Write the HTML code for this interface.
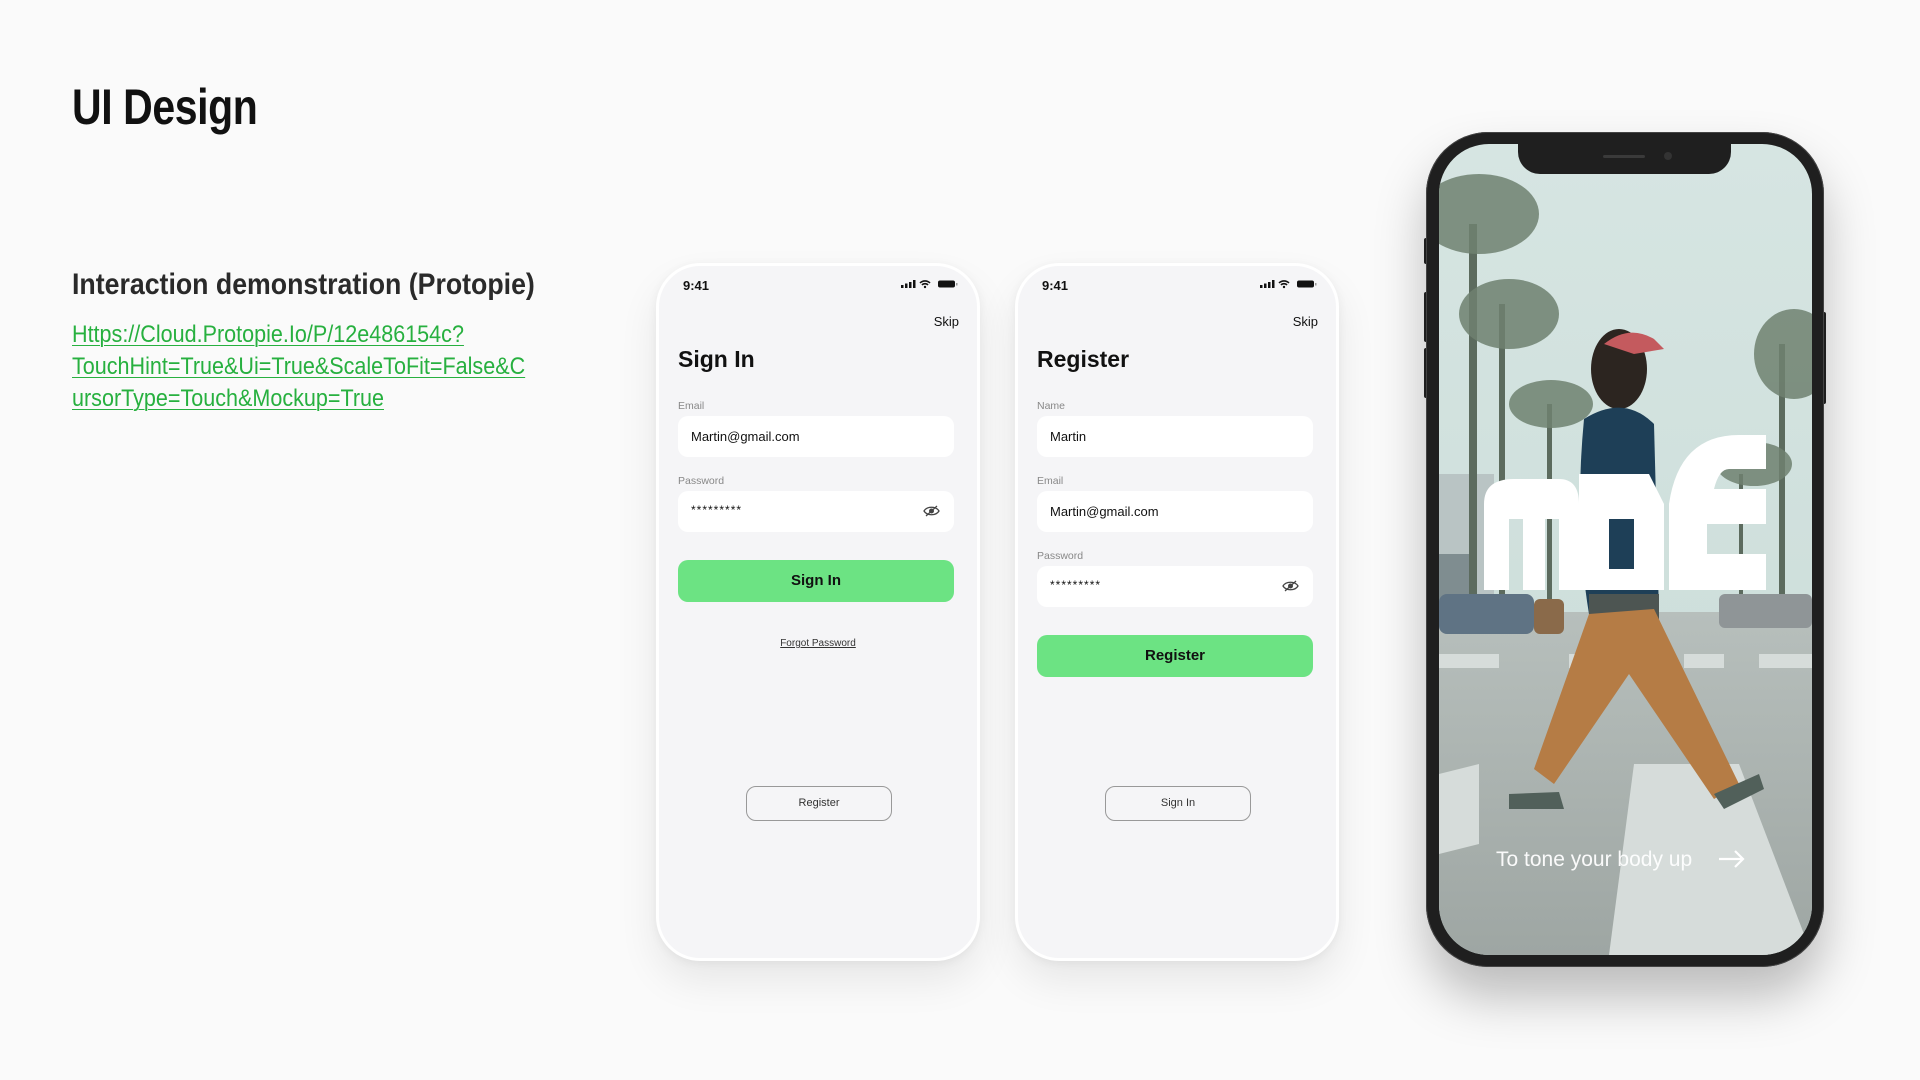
<!DOCTYPE html>
<html><head><meta charset="utf-8"><style>
*{margin:0;padding:0;box-sizing:border-box}
body{width:1920px;height:1080px;background:#fafafa;position:relative;overflow:hidden;font-family:"Liberation Sans",sans-serif}
.abs{position:absolute}
.h1{left:72px;top:78px;font-weight:bold;font-size:50px;color:#111;letter-spacing:-0.5px;transform:scaleX(0.82);transform-origin:0 0;white-space:nowrap}
.h2{left:72px;top:268px;font-weight:bold;font-size:30px;color:#2a2a2a;transform:scaleX(0.89);transform-origin:0 0;white-space:nowrap}
.link{left:72px;top:319px;font-size:24.5px;line-height:32px;color:#27b03f;text-decoration:underline;text-decoration-thickness:1px;text-underline-offset:3px;transform:scaleX(0.88);transform-origin:0 0;white-space:nowrap}
.ph{position:absolute;top:263px;width:324px;height:698px;border-radius:44px;background:#f5f5f7;border:3px solid #fff;box-shadow:0 20px 40px rgba(0,0,0,.08),0 2px 10px rgba(0,0,0,.05)}
.ph .t{position:absolute;left:24px;top:12px;font-size:13px;font-weight:bold;color:#111}
.ph .st{position:absolute;right:19px;top:13px}
.ph .skip{position:absolute;right:18px;top:48px;font-size:13px;color:#111}
.ph .ti{position:absolute;left:19px;top:80px;font-size:23px;font-weight:bold;color:#111}
.lbl{position:absolute;left:19px;font-size:10.5px;color:#888}
.in{position:absolute;left:19px;width:276px;height:41px;border-radius:10px;background:#fff;font-size:13px;color:#111;padding:13px 0 0 13px}
.pw{font-size:12px;letter-spacing:1px;padding-top:12px}
.eye{position:absolute;right:14px;top:13px}
.btn{position:absolute;left:19px;width:276px;height:42px;border-radius:10px;background:#6ce383;font-size:15px;font-weight:bold;color:#111;text-align:center;line-height:42px}
.ob{position:absolute;left:87px;top:520px;width:146px;height:35px;border:1px solid #999;border-radius:10px;font-size:11px;color:#333;text-align:center;line-height:33px}
</style></head><body>
<div class="abs h1">UI Design</div>
<div class="abs h2">Interaction demonstration (Protopie)</div>
<div class="abs link">Https://Cloud.Protopie.Io/P/12e486154c?<br>TouchHint=True&amp;Ui=True&amp;ScaleToFit=False&amp;C<br>ursorType=Touch&amp;Mockup=True</div>

<!-- phone 1 -->
<div class="ph" style="left:656px">
 <div class="t">9:41</div>
 <svg class="st" width="57" height="10" viewBox="0 0 57 10"><rect x="0" y="6" width="2.5" height="3" fill="#111"/><rect x="4" y="4.5" width="2.5" height="4.5" fill="#111"/><rect x="8" y="3" width="2.5" height="6" fill="#111"/><rect x="12" y="1" width="2.5" height="8" fill="#111"/><path d="M19 4a7 7 0 0 1 10 0M21 6a4 4 0 0 1 6 0" stroke="#111" stroke-width="1.6" fill="none"/><circle cx="24" cy="8" r="1.2" fill="#111"/><rect x="37" y="1.5" width="17" height="7" rx="2" fill="#111"/><rect x="55" y="4" width="1.5" height="2.5" fill="#999"/></svg>
 <div class="skip">Skip</div>
 <div class="ti">Sign In</div>
 <div class="lbl" style="top:134px">Email</div>
 <div class="in" style="top:150px">Martin@gmail.com</div>
 <div class="lbl" style="top:209px">Password</div>
 <div class="in pw" style="top:225px">*********<svg class="eye" width="17" height="14" viewBox="0 0 17 14"><path d="M1 7C4 2 13 2 16 7C13 12 4 12 1 7Z" stroke="#444" stroke-width="1.3" fill="none"/><circle cx="8.5" cy="7" r="2.5" fill="#444"/><path d="M3 12L14 2" stroke="#444" stroke-width="1.2"/></svg></div>
 <div class="btn" style="top:294px">Sign In</div>
 <div class="abs" style="left:0;width:318px;top:372px;text-align:center;font-size:10px;color:#333;text-decoration:underline">Forgot Password</div>
 <div class="ob">Register</div>
</div>

<!-- phone 2 -->
<div class="ph" style="left:1015px">
 <div class="t">9:41</div>
 <svg class="st" width="57" height="10" viewBox="0 0 57 10"><rect x="0" y="6" width="2.5" height="3" fill="#111"/><rect x="4" y="4.5" width="2.5" height="4.5" fill="#111"/><rect x="8" y="3" width="2.5" height="6" fill="#111"/><rect x="12" y="1" width="2.5" height="8" fill="#111"/><path d="M19 4a7 7 0 0 1 10 0M21 6a4 4 0 0 1 6 0" stroke="#111" stroke-width="1.6" fill="none"/><circle cx="24" cy="8" r="1.2" fill="#111"/><rect x="37" y="1.5" width="17" height="7" rx="2" fill="#111"/><rect x="55" y="4" width="1.5" height="2.5" fill="#999"/></svg>
 <div class="skip">Skip</div>
 <div class="ti">Register</div>
 <div class="lbl" style="top:134px">Name</div>
 <div class="in" style="top:150px">Martin</div>
 <div class="lbl" style="top:209px">Email</div>
 <div class="in" style="top:225px">Martin@gmail.com</div>
 <div class="lbl" style="top:284px">Password</div>
 <div class="in pw" style="top:300px">*********<svg class="eye" width="17" height="14" viewBox="0 0 17 14"><path d="M1 7C4 2 13 2 16 7C13 12 4 12 1 7Z" stroke="#444" stroke-width="1.3" fill="none"/><circle cx="8.5" cy="7" r="2.5" fill="#444"/><path d="M3 12L14 2" stroke="#444" stroke-width="1.2"/></svg></div>
 <div class="btn" style="top:369px">Register</div>
 <div class="ob">Sign In</div>
</div>

<!-- right phone -->
<div class="abs" style="left:1424px;top:238px;width:4px;height:26px;background:#222;border-radius:2px"></div>
<div class="abs" style="left:1424px;top:292px;width:4px;height:50px;background:#222;border-radius:2px"></div>
<div class="abs" style="left:1424px;top:348px;width:4px;height:50px;background:#222;border-radius:2px"></div>
<div class="abs" style="left:1822px;top:312px;width:4px;height:92px;background:#222;border-radius:2px"></div>
<div class="abs" style="left:1426px;top:132px;width:398px;height:835px;border-radius:62px;background:#1f1f1f;box-shadow:0 30px 50px rgba(0,0,0,.25),0 0 0 1px #444 inset"></div>
<svg class="abs" style="left:1439px;top:144px" width="373" height="811" viewBox="0 0 373 811">
 <defs><clipPath id="c"><rect width="373" height="811" rx="50"/></clipPath>
 <linearGradient id="sky" x1="0" y1="0" x2="0" y2="1"><stop offset="0" stop-color="#d6e5e2"/><stop offset="1" stop-color="#c9dbd7"/></linearGradient>
 <linearGradient id="road" x1="0" y1="0" x2="0" y2="1"><stop offset="0" stop-color="#b7bfbc"/><stop offset="1" stop-color="#9ea6a3"/></linearGradient></defs>
 <g clip-path="url(#c)">
  <rect width="373" height="811" fill="url(#sky)"/>
  <rect y="468" width="373" height="343" fill="url(#road)"/>
  <rect x="0" y="330" width="55" height="140" fill="#b9c4c4"/>
  <rect x="0" y="410" width="30" height="60" fill="#7f8d90"/>
  <g fill="#5c6b5e">
   <rect x="30" y="80" width="8" height="400"/>
   <rect x="60" y="160" width="6" height="320"/>
   <rect x="108" y="260" width="5" height="200"/>
   <rect x="340" y="200" width="6" height="270"/>
   <rect x="300" y="330" width="4" height="140"/>
  </g>
  <g fill="#6f8170" opacity=".85">
   <ellipse cx="40" cy="70" rx="60" ry="40"/>
   <ellipse cx="70" cy="170" rx="50" ry="35"/>
   <ellipse cx="112" cy="260" rx="42" ry="24"/>
   <ellipse cx="355" cy="210" rx="40" ry="45"/>
   <ellipse cx="315" cy="320" rx="38" ry="22"/>
  </g>
  <rect x="0" y="450" width="95" height="40" rx="8" fill="#5f7384"/>
  <rect x="95" y="455" width="30" height="35" rx="6" fill="#8a6a4a"/>
  <rect x="280" y="450" width="93" height="34" rx="6" fill="#8f9597"/>
  <g fill="#d6dcda">
   <rect x="0" y="510" width="60" height="14"/><rect x="130" y="510" width="40" height="14"/><rect x="245" y="510" width="40" height="14"/><rect x="320" y="510" width="53" height="14"/>
   <polygon points="0,630 40,620 40,700 0,710"/>
   <polygon points="195,620 300,620 373,811 170,811"/>
  </g>
  <ellipse cx="180" cy="225" rx="28" ry="40" fill="#2c2520"/>
  <path d="M165 200 Q190 180 215 195 L225 205 L195 210 Z" fill="#c45a5e"/>
  <path d="M145 275 Q185 250 215 280 L220 470 L150 470 Q135 380 145 275Z" fill="#1e3f57"/>
  <rect x="150" y="450" width="70" height="30" fill="#4d5552"/>
  <path d="M150 470 L215 465 L300 640 L275 655 L190 530 L115 640 L95 625 Z" fill="#b57c45"/>
  <path d="M70 650 L120 648 L125 665 L70 665Z" fill="#51605a"/>
  <path d="M275 650 L320 630 L325 645 L285 665Z" fill="#51605a"/>
  <g fill="#fff">
   <path d="M45 446 L45 360 Q45 335 75 335 L120 335 Q140 335 140 360 L140 446 L120 446 L120 375 L106 375 L106 446 L84 446 L84 375 L70 375 L70 446Z"/>
   <path d="M140 330 L210 330 L225 360 L225 446 L140 446 Z M170 375 L170 425 L195 425 L195 375Z" fill-rule="evenodd"/>
   <path d="M230 446 L230 360 Q240 291 300 291 L327 291 L327 325 L290 325 Q280 325 275 345 L327 345 L327 380 L268 380 L268 410 L327 410 L327 446Z"/>
  </g>
  <text x="57" y="722" font-family="Liberation Sans,sans-serif" font-size="21" fill="#fff" opacity=".95">To tone your body up</text>
  <path d="M280 715 L304 715 M296 707 L304 715 L296 723" stroke="#fff" stroke-width="2.2" fill="none"/>
 </g>
</svg>
<div class="abs" style="left:1518px;top:140px;width:213px;height:34px;background:#1f1f1f;border-radius:0 0 22px 22px"></div>
<div class="abs" style="left:1603px;top:155px;width:42px;height:3px;background:#3a3a3a;border-radius:2px"></div>
<div class="abs" style="left:1664px;top:152px;width:8px;height:8px;background:#333;border-radius:50%"></div>
</body></html>
